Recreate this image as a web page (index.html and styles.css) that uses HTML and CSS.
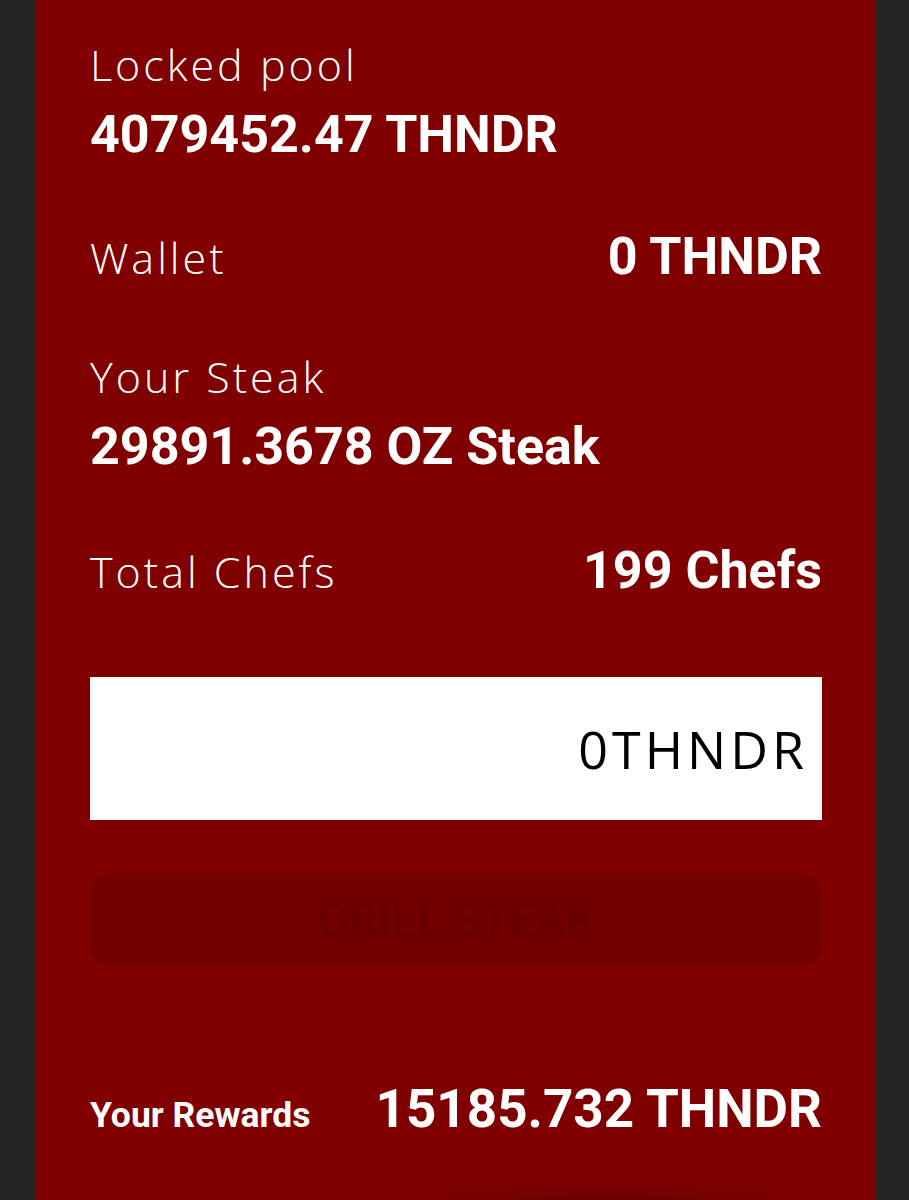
FILE: index.html
```html
<!DOCTYPE html>
<html lang="en">
<head>
    <meta charset="UTF-8">
    <meta name="viewport" content="width=device-width, initial-scale=1.0">
    <title>Steak House</title>
    <link rel="stylesheet" href="styles.css">
</head>
<body>
    <div class="panel">
        <div class="stat first">
            <div class="label">Locked pool</div>
            <div class="value">4079452.47 THNDR</div>
        </div>
        <div class="stat row">
            <div class="label">Wallet</div>
            <div class="value">0 THNDR</div>
        </div>
        <div class="stat steak">
            <div class="label">Your Steak</div>
            <div class="value">29891.3678 OZ Steak</div>
        </div>
        <div class="stat row">
            <div class="label">Total Chefs</div>
            <div class="value">199 Chefs</div>
        </div>
        <input type="text" class="amount" value="0THNDR">
        <button class="grill" disabled>GRILL STEAK</button>
        <div class="rewards row">
            <div class="rewards-label">Your Rewards</div>
            <div class="value big">15185.732 THNDR</div>
        </div>
    </div>
</body>
</html>
```

FILE: styles.css
```css
body {
    margin: 0;
    padding: 0;
    background: #232323;
    font-family: Roboto, "Liberation Sans", sans-serif;
    color: #fff;
}
.panel {
    margin: 0 33px 0 36px;
    min-height: 1200px;
    box-sizing: border-box;
    padding: 35px 54px 0;
    background: #800000;
    background-image: radial-gradient(ellipse 260px 40px at 68% 1215px, rgba(0, 0, 0, 0.22), rgba(0, 0, 0, 0));
}
.stat {
    margin-bottom: 58px;
}
.stat.first {
    margin-bottom: 50px;
}
.stat.steak {
    margin-bottom: 52px;
}
.row {
    display: flex;
    justify-content: space-between;
    align-items: baseline;
}
.label {
    font-family: "Open Sans", "Liberation Sans", sans-serif;
    font-weight: 300;
    font-size: 43px;
    line-height: 60px;
    letter-spacing: 3px;
}
.value {
    font-weight: 700;
    font-size: 52px;
    line-height: 64px;
}
.value.big {
    font-size: 53px;
}
.stat .label + .value {
    margin-top: 8px;
}
.amount {
    display: block;
    width: 100%;
    height: 143px;
    box-sizing: border-box;
    margin: 74px 0 53px;
    padding: 0 14px 0 0;
    border: none;
    outline: none;
    background: #fff;
    color: #000;
    font-family: "Open Sans", "Liberation Sans", sans-serif;
    font-size: 52px;
    letter-spacing: 4px;
    text-align: right;
}
.grill {
    display: block;
    width: 100%;
    height: 93px;
    border: none;
    border-radius: 22px;
    background: #720000;
    color: #680000;
    font-family: Roboto, "Liberation Sans", sans-serif;
    font-weight: 700;
    font-size: 46px;
}
.rewards {
    margin-top: 111px;
}
.rewards-label {
    font-weight: 700;
    font-size: 35.5px;
}
```
